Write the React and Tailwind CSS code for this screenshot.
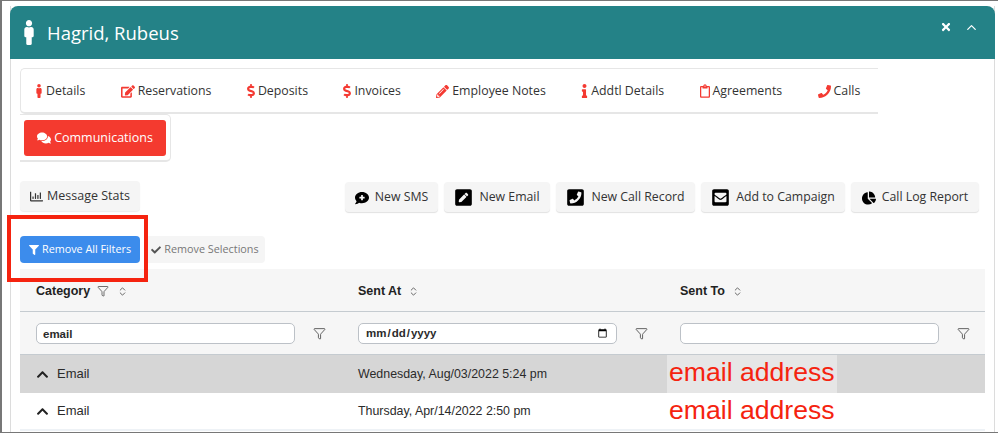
import React from "react";
import { FaMale, FaEdit, FaDollarSign, FaPencilAlt, FaInfo, FaRegClipboard, FaPhone, FaComments, FaRegChartBar, FaCommentMedical, FaPenSquare, FaPhoneSquare, FaEnvelopeSquare, FaChartPie, FaFilter, FaCheck, FaTimes, FaChevronUp } from "react-icons/fa";
import { ChevronUp, ChevronsUpDown, Funnel } from "lucide-react";

const tabs = [
  [FaMale, "Details", "text-[14px] w-[8px]"],
  [FaEdit, "Reservations", "text-[15px] w-[14px]"],
  [FaDollarSign, "Deposits", "text-[14px] w-[8px]"],
  [FaDollarSign, "Invoices", "text-[14px] w-[8px]"],
  [FaPencilAlt, "Employee Notes", "text-[13px] w-[13px]"],
  [FaInfo, "Addtl Details", "text-[14px] w-[7px]"],
  [FaRegClipboard, "Agreements", "text-[14px] w-[10px]"],
  [FaPhone, "Calls", "text-[13px] w-[13px]"],
];

const actions = [
  [FaCommentMedical, "New SMS", "w-[93px]", 14],
  [FaPenSquare, "New Email", "w-[106px]", 19],
  [FaPhoneSquare, "New Call Record", "w-[139px]", 19],
  [FaEnvelopeSquare, "Add to Campaign", "w-[144px]", 19],
  [FaChartPie, "Call Log Report", "w-[128px]", 14],
];

function FilterCell({ type = "text", value }) {
  return (
    <div className="flex items-center pl-4">
      <input
        type={type}
        readOnly={type === "text"}
        defaultValue={value}
        className="h-[21px] w-[259px] rounded-[5px] border border-[#bcc1c7] bg-white px-[6px] pt-[1px] font-['Liberation_Sans',sans-serif] text-[11.5px] font-bold text-[#2b2b2b] outline-none"
      />
      <Funnel size={13} strokeWidth={1.4} className="mt-[1px] ml-[18px] text-[#333]" />
    </div>
  );
}

function HeaderCell({ label, filter }) {
  return (
    <div className="flex items-center pt-[2px] pl-4 font-['Liberation_Sans',sans-serif] text-[12.5px] font-bold text-[#222]">
      <span>{label}</span>
      {filter && <Funnel size={12} strokeWidth={1.4} className="ml-[7px] text-[#333]" />}
      <ChevronsUpDown size={11} strokeWidth={1.6} className={filter ? "ml-[8px] text-[#333]" : "ml-[7px] text-[#333]"} />
    </div>
  );
}

function Row({ bg, date, email }) {
  return (
    <div className={`relative grid grid-cols-[322px_322px_321px] font-['Liberation_Sans',sans-serif] text-[12.4px] text-[#2b2b2b] ${bg}`}>
      <div className="flex items-center pl-4">
        <FaChevronUp className="text-[13px] text-[#222]" />
        <span className="ml-[8px] text-[13px]">Email</span>
      </div>
      <div className="flex items-center pl-4">{date}</div>
      <div />
      <div className={`absolute top-0 bottom-0 left-[647px] flex w-[170px] items-center pl-[2px] text-[26.6px] whitespace-nowrap text-[#f5230f] ${email}`}>
        email address
      </div>
    </div>
  );
}

export default function App() {
  return (
    <div className="relative h-[433px] w-[998px] overflow-hidden border-t border-b border-l-2 border-[#777] bg-white pt-[5px] pl-[8px] font-['Open_Sans',sans-serif]">
      <div className="flex h-[430px] w-[985px] flex-col border-x border-[#dcdcdc]">
        <header className="-mx-px flex h-[53px] shrink-0 items-center rounded-t-[8px] bg-[#248287] pr-[16px] pl-[13px] text-white">
          <FaMale className="w-[12px] text-[25px]" />
          <h1 className="mt-[1px] ml-[12px] text-[18.5px] leading-none">Hagrid, Rubeus</h1>
          <div className="-mt-[11px] ml-auto flex items-center gap-[12px]">
            <FaTimes className="text-[12px]" />
            <ChevronUp size={15} strokeWidth={2} />
          </div>
        </header>

        <div className="flex flex-col px-[9px] pt-[9px]">
          <nav className="flex h-[46px] w-[858px] items-center rounded-l-[5px] border-y border-b-2 border-l border-[#e6e6e6] pt-[2px] pl-[14px] text-[12.35px] text-[#333]">
            {tabs.map(([Icon, label, cls]) => (
              <span key={label} className="mr-[35.4px] flex items-center gap-[3px] whitespace-nowrap">
                <Icon className={`${cls} text-[#f43a32]`} />
                {label}
              </span>
            ))}
          </nav>
          <div className="flex h-[48px] w-[151px] items-center rounded-r-[5px] border-y border-r border-b-2 border-[#e6e6e6] pl-[4px]">
            <button className="flex h-[36px] w-[142px] items-center justify-center gap-[3px] rounded-[3px] bg-[#f43a2f] pt-[1px] text-[12.5px] text-white">
              <FaComments className="text-[14px]" />
              Communications
            </button>
          </div>

          <div className="mt-[19px] flex items-start justify-between pr-[6px]">
            <button className="flex h-[30px] w-[120px] items-center justify-center gap-[4px] rounded-[4px] bg-[#f5f5f5] text-[12.5px] text-[#333] shadow-[0_1px_1px_rgba(0,0,0,0.08)]">
              <FaRegChartBar className="text-[13px]" />
              Message Stats
            </button>
            <div className="mt-px flex gap-[6px]">
              {actions.map(([Icon, label, w, size]) => (
                <button key={label} className={`flex h-[30px] ${w} items-center justify-center gap-[6px] rounded-[4px] bg-[#f5f5f5] pt-[1px] text-[12.3px] text-[#333] shadow-[0_1px_1px_rgba(0,0,0,0.12)]`}>
                  <Icon size={size} className="text-black" />
                  {label}
                </button>
              ))}
            </div>
          </div>

          <div className="mt-[24px] flex gap-[5px]">
            <button className="flex h-[27px] w-[120px] items-center justify-center gap-[3px] rounded-[4px] bg-[#3c8cec] text-[10.8px] text-white">
              <FaFilter className="text-[10px]" />
              Remove All Filters
            </button>
            <button className="flex h-[27px] w-[120px] items-center justify-center gap-[3px] rounded-[4px] bg-[#f5f5f5] text-[10.8px] text-[#777]">
              <FaCheck className="text-[10px] text-[#555]" />
              Remove Selections
            </button>
          </div>

          <div className="mt-[6px] w-[965px]">
            <div className="grid h-[42px] grid-cols-[322px_322px_321px] bg-[#f6f6f6]">
              <HeaderCell label="Category" filter />
              <HeaderCell label="Sent At" />
              <HeaderCell label="Sent To" />
            </div>
            <div className="grid h-[44px] grid-cols-[322px_322px_321px] border-y border-[#c5cbd0] bg-[#f6f6f6]">
              <FilterCell value="email" />
              <FilterCell type="date" />
              <FilterCell />
            </div>
            <div className="grid grid-rows-[38px_36px]">
              <Row bg="bg-[#d6d6d6]" date="Wednesday, Aug/03/2022 5:24 pm" email="bg-[#e6e6e6] pb-[2px]" />
              <Row bg="bg-white" date="Thursday, Apr/14/2022 2:50 pm" email="" />
            </div>
            <div className="h-[2px] bg-[#eef2f6]" />
          </div>
        </div>
      </div>
      <div className="absolute top-[214px] left-[5px] h-[67px] w-[141px] border-[4px] border-[#f5230f]" />
    </div>
  );
}
